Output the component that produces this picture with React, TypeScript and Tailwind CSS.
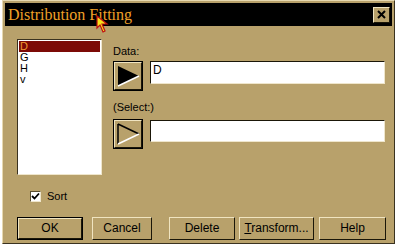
import React from "react";

const raised =
  "border border-t-[#f0e4c0] border-l-[#f0e4c0] border-b-[#1a1608] border-r-[#1a1608]";
const sunken =
  "border border-t-[#5a4e30] border-l-[#5a4e30] border-b-[#efe6cc] border-r-[#efe6cc]";

function Btn({ w, ml, children, def }: { w: number; ml: number; children: React.ReactNode; def?: boolean }) {
  return (
    <div
      style={{ width: w, marginLeft: ml }}
      className={
        "h-[23px] flex items-center justify-center text-[12px] text-black " +
        (def ? "border border-black" : "")
      }
    >
      <div className={"w-full h-full flex items-center justify-center " + raised}>{children}</div>
    </div>
  );
}

function ArrowBtn({ filled }: { filled?: boolean }) {
  return (
    <div className="w-[30px] h-[30px] border border-black shrink-0">
      <div className={"w-full h-full flex items-center justify-center " + raised}>
        <svg width="26" height="24" viewBox="0 0 26 24">
          {filled ? (
            <>
              <polygon points="3,2 24,12 3,22" fill="#000" />
              <line x1="3" y1="22" x2="24" y2="12" stroke="#fff" strokeWidth="1.5" />
            </>
          ) : (
            <>
              <line x1="3" y1="2" x2="24" y2="12" stroke="#000" strokeWidth="1.5" />
              <line x1="3" y1="2" x2="3" y2="22" stroke="#000" strokeWidth="1.5" />
              <line x1="3" y1="22" x2="24" y2="12" stroke="#fff" strokeWidth="1.5" />
            </>
          )}
        </svg>
      </div>
    </div>
  );
}

export default function App() {
  return (
    <div
      className="w-[399px] h-[250px] bg-white relative overflow-hidden"
      style={{ fontFamily: '"Liberation Sans", Arial, sans-serif' }}
    >
      <div className="ml-[2px] w-[393px] h-[244px] bg-[#b8a16b] border border-t-[#e6d8b0] border-l-[#e6d8b0] border-b-[#3a3220] border-r-[#3a3220] p-[2px] flex flex-col">
        {/* title bar */}
        <div className="h-[23px] bg-black flex items-center justify-between pl-[3px] pr-[2px]">
          <span
            className="text-[16px] leading-none text-[#f0a028]"
            style={{ fontFamily: '"Liberation Serif", "Times New Roman", serif' }}
          >
            Distribution Fitting
          </span>
          <div className={"w-[17px] h-[16px] bg-[#b8a16b] flex items-center justify-center " + raised}>
            <svg width="9" height="9" viewBox="0 0 9 9">
              <path d="M1 1 L8 8 M8 1 L1 8" stroke="#000" strokeWidth="2" />
            </svg>
          </div>
        </div>

        {/* body */}
        <div className="flex pl-[12px] pt-[13px]">
          <div className="flex flex-col">
            <div className="w-[85px] h-[136px] bg-white border border-t-[#3a3220] border-l-[#3a3220] border-b-[#efe6cc] border-r-[#efe6cc] pt-[1px] px-[1px] text-[11px]">
              <div className="bg-[#7c0a06] text-[#f09830] pl-[1px] h-[11px] leading-[11px]">D</div>
              <div className="pl-[1px] h-[11px] leading-[11px] text-black">G</div>
              <div className="pl-[1px] h-[11px] leading-[11px] text-black">H</div>
              <div className="pl-[1px] h-[11px] leading-[11px] text-black">v</div>
            </div>
            <div className="flex items-center mt-[13px] ml-[13px]">
              <div className={"w-[11px] h-[11px] bg-white flex items-center justify-center " + sunken}>
                <svg width="9" height="9" viewBox="0 0 9 9">
                  <path d="M1 4 L3.5 6.5 L8 1.5" stroke="#000" strokeWidth="1.8" fill="none" />
                </svg>
              </div>
              <span className="ml-[6px] text-[11px] text-black">Sort</span>
            </div>
          </div>

          <div className="ml-[11px] flex flex-col">
            <div className="text-[11px] leading-[12px] text-black mt-[6px]">Data:</div>
            <div className="flex mt-[4px]">
              <ArrowBtn filled />
              <div className="ml-[7px] w-[235px] h-[23px] bg-white border border-t-[#1a1608] border-l-[#1a1608] border-b-[#efe6cc] border-r-[#efe6cc] text-[12px] pl-[2px] leading-[16px]">
                D
              </div>
            </div>
            <div className="text-[11px] leading-[12px] text-black mt-[10px]">(Select:)</div>
            <div className="flex mt-[6px]">
              <ArrowBtn />
              <div className="ml-[7px] mt-[1px] w-[235px] h-[22px] bg-white border border-t-[#1a1608] border-l-[#1a1608] border-b-[#efe6cc] border-r-[#efe6cc]" />
            </div>
          </div>
        </div>

        {/* buttons */}
        <div className="flex mt-[12px]">
          <Btn w={66} ml={12} def>OK</Btn>
          <Btn w={60} ml={9}>Cancel</Btn>
          <Btn w={66} ml={17}>Delete</Btn>
          <Btn w={75} ml={4}>
            <span><span className="underline">T</span>ransform...</span>
          </Btn>
          <Btn w={67} ml={5}>Help</Btn>
        </div>
      </div>

      {/* mouse cursor */}
      <svg className="absolute left-[96px] top-[15px]" width="16" height="20" viewBox="0 0 16 20">
        <path d="M1 1 L1 13 L4 10 L7 17 L9 16 L6 9 L11 9 Z" fill="#f6e21a" stroke="#c01010" strokeWidth="1.2" />
      </svg>
    </div>
  );
}
